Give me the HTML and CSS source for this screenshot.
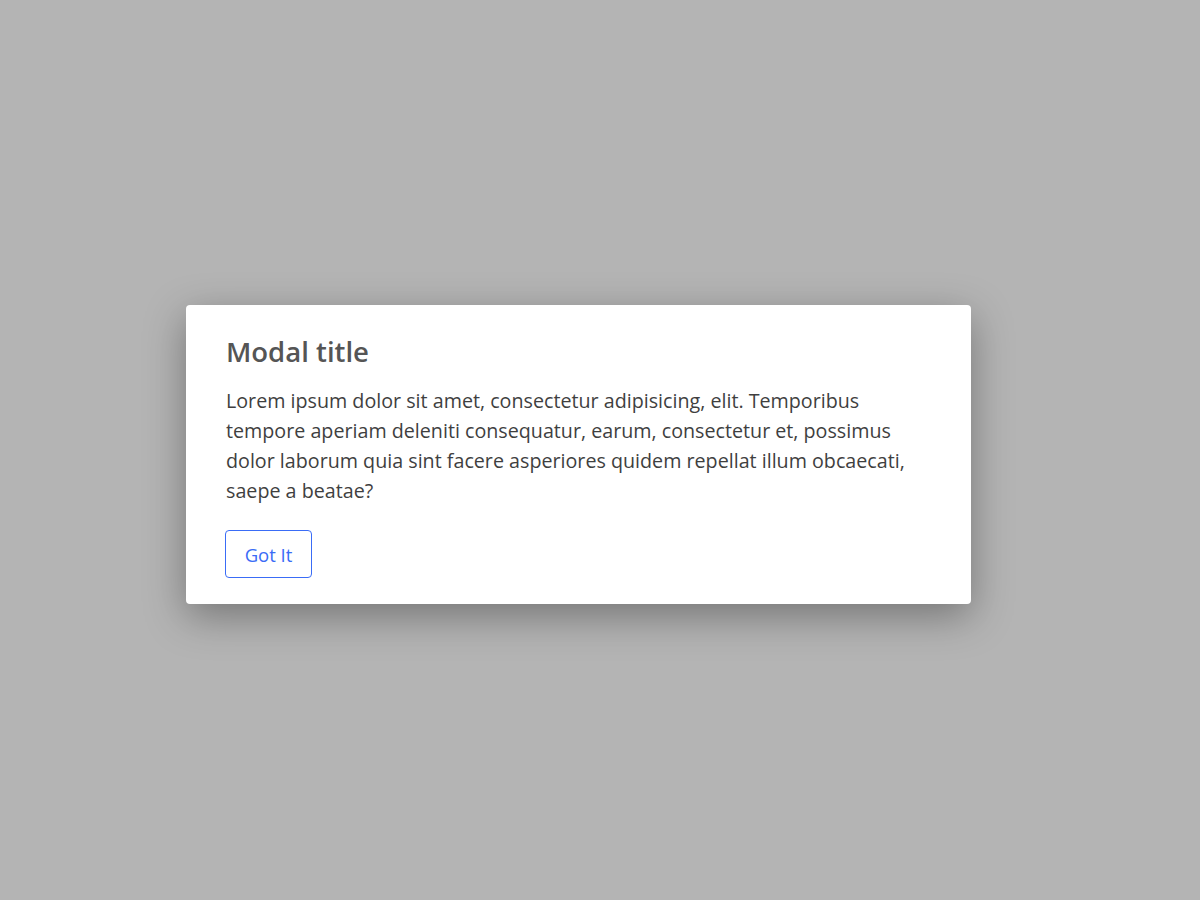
FILE: index.html
```html
<!DOCTYPE html>
<html lang="en">
<head>
<meta charset="utf-8">
<title>Modal</title>
<link rel="stylesheet" href="styles.css">
</head>
<body>
<div class="overlay">
  <div class="modal">
    <h2 class="modal-title">Modal title</h2>
    <p class="modal-text">Lorem ipsum dolor sit amet, consectetur adipisicing, elit. Temporibus tempore aperiam deleniti consequatur, earum, consectetur et, possimus dolor laborum quia sint facere asperiores quidem repellat illum obcaecati, saepe a beatae?</p>
    <button class="btn" type="button">Got It</button>
  </div>
</div>
</body>
</html>
```

FILE: styles.css
```css
html, body {
  margin: 0;
  padding: 0;
  height: 100%;
}
body {
  background: #b4b4b4;
  font-family: "Open Sans", "Noto Sans", sans-serif;
}
.overlay {
  padding: 305px 0 0 186px;
}
.modal {
  box-sizing: border-box;
  width: 785px;
  height: 299px;
  background: #ffffff;
  border-radius: 4px;
  padding: 30px 40px 26px 40px;
  box-shadow: 0 12px 40px rgba(0, 0, 0, 0.35);
}
.modal-title {
  margin: 0;
  font-size: 27.5px;
  line-height: 34px;
  font-weight: 600;
  color: #555555;
}
.modal-text {
  margin: 17px 0 0 0;
  font-size: 19.7px;
  line-height: 30px;
  color: #3f3f3f;
}
.btn {
  display: block;
  margin-top: 24px;
  box-sizing: border-box;
  width: 87px;
  height: 48px;
  margin-left: -1px;
  background: #ffffff;
  border: 1px solid #3a6cf6;
  border-radius: 4px;
  color: #3a6cf6;
  font-family: inherit;
  font-size: 18.5px;
  padding: 0;
  cursor: pointer;
}
```
